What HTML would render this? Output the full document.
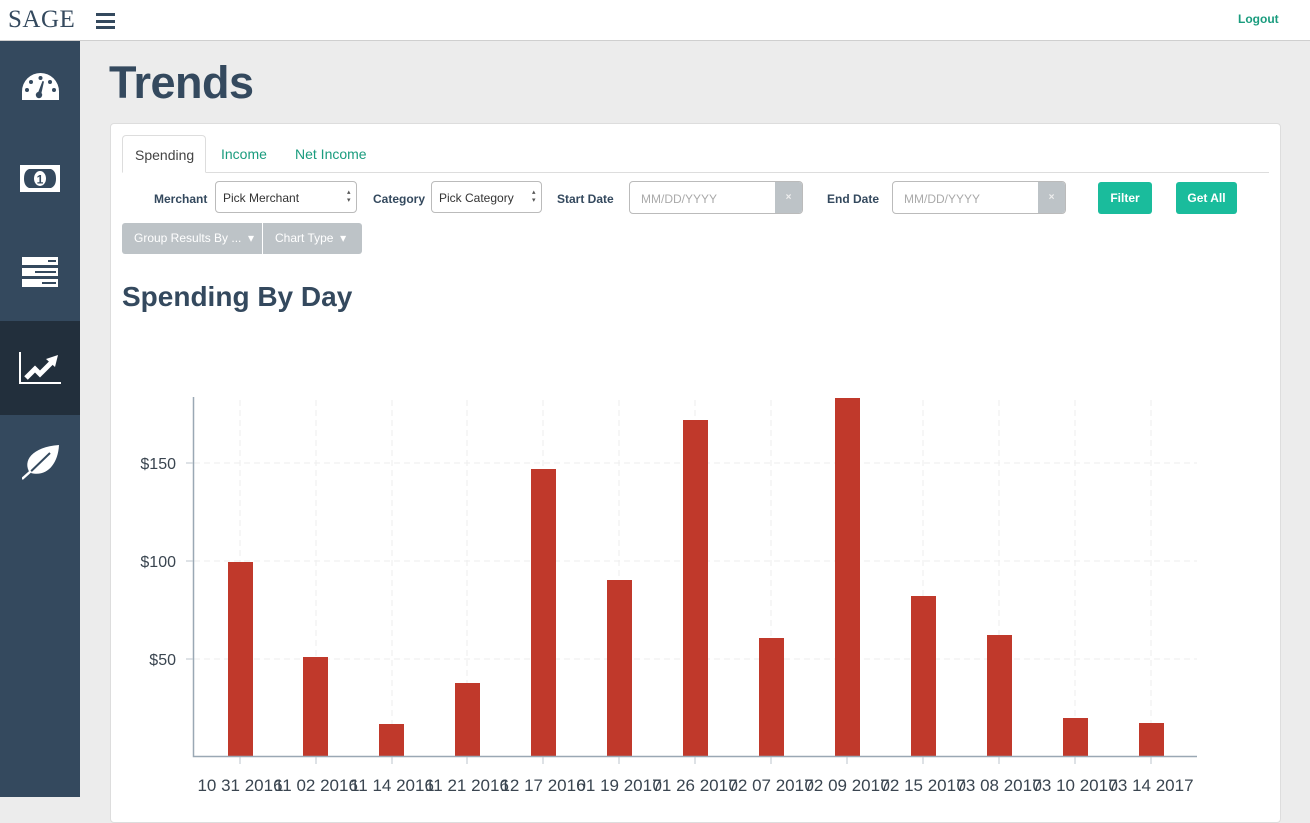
<!DOCTYPE html>
<html><head><meta charset="utf-8"><style>
*{box-sizing:border-box;margin:0;padding:0}
body{width:1310px;height:797px;overflow:hidden;background:#ececec;font-family:"Liberation Sans",sans-serif;position:relative}
.hdr{position:absolute;left:0;top:0;width:1310px;height:41px;background:#fff;border-bottom:1px solid #cfcfcf}
.logo{position:absolute;left:8px;top:6px;font-family:"Liberation Serif",serif;font-size:25px;color:#34495e;letter-spacing:0.5px}
.burger{position:absolute;left:96px;top:13px;width:19px;height:16px}
.burger i{display:block;height:3px;background:#34495e;margin-bottom:3.5px}
.logout{position:absolute;left:1238px;top:12px;font-size:12px;font-weight:bold;color:#1a9c7e}
.side{position:absolute;left:0;top:41px;width:80px;height:756px;background:#34495e}
.act{position:absolute;left:0;top:280px;width:80px;height:94px;background:#222f3c}
.side svg{position:absolute}
h1{position:absolute;left:109px;top:57px;font-size:45px;font-weight:bold;color:#34495e;letter-spacing:-0.5px}
.card{position:absolute;left:110px;top:123px;width:1171px;height:700px;background:#fff;border:1px solid #ddd;border-radius:4px}
.tabline{position:absolute;left:122px;top:172px;width:1147px;height:1px;background:#ddd}
.tab{position:absolute;top:135px;font-size:14px;color:#1a9c7e}
.tab.on{left:122px;top:135px;width:84px;height:38px;border:1px solid #ddd;border-bottom:1px solid #fff;border-radius:4px 4px 0 0;background:#fff;color:#444;padding:11px 0 0 12px}
.lbl{position:absolute;top:192px;font-size:12px;font-weight:bold;color:#34495e}
.sel{position:absolute;top:181px;height:32px;border:1px solid #bbb;border-radius:4px;background:#fff;font-size:12px;color:#333;padding:9px 0 0 7px}
.sel:after{content:"▴▾";position:absolute;right:3px;top:7px;font-size:7px;line-height:8px;width:6px;word-break:break-all;color:#555}
.date{position:absolute;top:181px;height:33px;border:1px solid #bbb;border-radius:4px;background:#fff;font-size:12px;color:#aaa;padding:10px 0 0 11px;overflow:hidden}
.date b{position:absolute;right:0;top:0;width:27px;height:33px;background:#bdc3c7;color:#eee;font-size:10px;text-align:center;line-height:31px}
.btn{position:absolute;top:182px;height:32px;background:#1abc9c;color:#fff;font-size:12px;font-weight:bold;border-radius:3px;text-align:center;line-height:32px}
.gbtn{position:absolute;top:223px;height:31px;background:#bdc3c7;color:#fff;font-size:12px;line-height:31px;padding-left:12px}
h2{position:absolute;left:122px;top:281px;font-size:28px;font-weight:bold;color:#34495e}
svg text{font-family:"Liberation Sans",sans-serif}
</style></head><body>
<div class="hdr"><div class="logo">SAGE</div><div class="burger"><i></i><i></i><i></i></div><div class="logout">Logout</div></div>
<div class="side">
<div class="act"></div>
<svg style="left:22px;top:32px" width="37" height="27" viewBox="0 0 37 27"><path d="M0 27 V18.5 A18.5 18.5 0 0 1 37 18.5 V27Z" fill="#fff"/><g fill="#34495e"><circle cx="18.5" cy="5" r="2"/><circle cx="9" cy="9" r="2"/><circle cx="28" cy="9" r="2"/><circle cx="5" cy="17" r="2"/><circle cx="32" cy="17" r="2"/><circle cx="17" cy="22" r="3.2"/><path d="M15.5 21 L20.5 8 L22 8.5 L19 22Z"/></g></svg>
<svg style="left:20px;top:124px" width="40" height="27" viewBox="0 0 40 27"><rect width="40" height="27" fill="#fff"/><path d="M4 13.5 Q4 6 9 4 H31 Q36 6 36 13.5 Q36 21 31 23 H9 Q4 21 4 13.5Z" fill="#34495e"/><ellipse cx="20" cy="13.5" rx="6" ry="7.5" fill="#fff"/><text x="20" y="18.5" font-size="12" font-weight="bold" fill="#34495e" text-anchor="middle">1</text></svg>
<svg style="left:22px;top:216px" width="36" height="30" viewBox="0 0 36 30"><g fill="#fff"><rect y="0" width="36" height="8"/><rect y="11" width="36" height="8"/><rect y="22" width="36" height="8"/></g><g fill="#34495e"><rect x="26" y="3" width="8" height="2"/><rect x="13" y="14" width="21" height="2"/><rect x="20" y="25" width="14" height="2"/></g></svg>
<svg style="left:19px;top:311px" width="42" height="32" viewBox="0 0 42 32"><path d="M1 0 V31 H42" stroke="#fff" stroke-width="2" fill="none"/><path d="M7 26 L16 17 L21 22 L32 11" stroke="#fff" stroke-width="5" fill="none"/><path d="M27 7 L39 3 L36 15Z" fill="#fff"/></svg>
<svg style="left:22px;top:402px" width="38" height="37" viewBox="0 0 38 37"><path d="M8 30 C0 18 10 4 37 2 C36 22 24 34 9 30Z" fill="#fff"/><path d="M1 36 L28 10" stroke="#34495e" stroke-width="2"/><path d="M0 36 L9 28" stroke="#fff" stroke-width="2.5"/></svg>
</div>
<h1>Trends</h1>
<div class="card"></div>
<div class="tabline"></div>
<div class="tab on">Spending</div>
<div class="tab" style="left:221px;top:146px">Income</div>
<div class="tab" style="left:295px;top:146px">Net Income</div>
<div class="lbl" style="left:154px">Merchant</div>
<div class="sel" style="left:215px;width:142px">Pick Merchant</div>
<div class="lbl" style="left:373px">Category</div>
<div class="sel" style="left:431px;width:111px">Pick Category</div>
<div class="lbl" style="left:557px">Start Date</div>
<div class="date" style="left:629px;width:174px">MM/DD/YYYY<b>×</b></div>
<div class="lbl" style="left:827px">End Date</div>
<div class="date" style="left:892px;width:174px">MM/DD/YYYY<b>×</b></div>
<div class="btn" style="left:1098px;width:54px">Filter</div>
<div class="btn" style="left:1176px;width:61px">Get All</div>
<div class="gbtn" style="left:122px;width:140px;border-radius:3px 0 0 3px">Group Results By ... &nbsp;▾</div>
<div class="gbtn" style="left:263px;width:99px;border-radius:0 3px 3px 0">Chart Type &nbsp;▾</div>
<h2>Spending By Day</h2>
<svg style="position:absolute;left:0;top:0" width="1310" height="797">
<g stroke="#eee" stroke-dasharray="6,4" stroke-width="1">
<line x1="194" x2="1197" y1="463" y2="463"/><line x1="194" x2="1197" y1="561" y2="561"/><line x1="194" x2="1197" y1="659" y2="659"/>
<line x1="240" x2="240" y1="400" y2="756"/><line x1="316" x2="316" y1="400" y2="756"/><line x1="392" x2="392" y1="400" y2="756"/><line x1="467" x2="467" y1="400" y2="756"/><line x1="543" x2="543" y1="400" y2="756"/><line x1="619" x2="619" y1="400" y2="756"/><line x1="695" x2="695" y1="400" y2="756"/><line x1="771" x2="771" y1="400" y2="756"/><line x1="847" x2="847" y1="400" y2="756"/><line x1="923" x2="923" y1="400" y2="756"/><line x1="999" x2="999" y1="400" y2="756"/><line x1="1075" x2="1075" y1="400" y2="756"/><line x1="1151" x2="1151" y1="400" y2="756"/>
</g>
<g fill="#c0392b">
<rect x="228" y="562" width="25" height="194"/><rect x="303" y="657" width="25" height="99"/><rect x="379" y="724" width="25" height="32"/><rect x="455" y="683" width="25" height="73"/><rect x="531" y="469" width="25" height="287"/><rect x="607" y="580" width="25" height="176"/><rect x="683" y="420" width="25" height="336"/><rect x="759" y="638" width="25" height="118"/><rect x="835" y="398" width="25" height="358"/><rect x="911" y="596" width="25" height="160"/><rect x="987" y="635" width="25" height="121"/><rect x="1063" y="718" width="25" height="38"/><rect x="1139" y="723" width="25" height="33"/>
</g>
<g stroke="#9aa8b4" stroke-width="1.5" fill="none"><path d="M193.5 397 V756.5 H1197"/></g>
<g stroke="#bcc6ce" stroke-width="1"><line x1="186" x2="193" y1="463" y2="463"/><line x1="186" x2="193" y1="561" y2="561"/><line x1="186" x2="193" y1="659" y2="659"/>
<line x1="240" x2="240" y1="757" y2="764"/><line x1="316" x2="316" y1="757" y2="764"/><line x1="392" x2="392" y1="757" y2="764"/><line x1="467" x2="467" y1="757" y2="764"/><line x1="543" x2="543" y1="757" y2="764"/><line x1="619" x2="619" y1="757" y2="764"/><line x1="695" x2="695" y1="757" y2="764"/><line x1="771" x2="771" y1="757" y2="764"/><line x1="847" x2="847" y1="757" y2="764"/><line x1="923" x2="923" y1="757" y2="764"/><line x1="999" x2="999" y1="757" y2="764"/><line x1="1075" x2="1075" y1="757" y2="764"/><line x1="1151" x2="1151" y1="757" y2="764"/></g>
<g fill="#3a4550" font-size="16" text-anchor="end"><text x="176" y="469">$150</text><text x="176" y="567">$100</text><text x="176" y="665">$50</text></g>
<g fill="#3a4550" font-size="17" text-anchor="middle">
<text x="240" y="791">10 31 2016</text><text x="316" y="791">11 02 2016</text><text x="392" y="791">11 14 2016</text><text x="467" y="791">11 21 2016</text><text x="543" y="791">12 17 2016</text><text x="619" y="791">01 19 2017</text><text x="695" y="791">01 26 2017</text><text x="771" y="791">02 07 2017</text><text x="847" y="791">02 09 2017</text><text x="923" y="791">02 15 2017</text><text x="999" y="791">03 08 2017</text><text x="1075" y="791">03 10 2017</text><text x="1151" y="791">03 14 2017</text>
</g>
</svg>
</body></html>
